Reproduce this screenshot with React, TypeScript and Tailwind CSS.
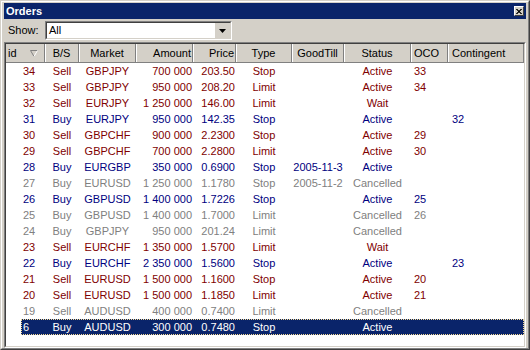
import React from 'react';

type Side = 'Buy' | 'Sell';

interface Order {
  id: number;
  side: Side;
  market: string;
  amount: string;
  price: string;
  type: 'Stop' | 'Limit';
  goodTill?: string;
  status: 'Active' | 'Wait' | 'Cancelled';
  oco?: string;
  contingent?: string;
}

const ORDERS: Order[] = [
  { id: 34, side: 'Sell', market: 'GBPJPY', amount: '700 000', price: '203.50', type: 'Stop', status: 'Active', oco: '33' },
  { id: 33, side: 'Sell', market: 'GBPJPY', amount: '950 000', price: '208.20', type: 'Limit', status: 'Active', oco: '34' },
  { id: 32, side: 'Sell', market: 'EURJPY', amount: '1 250 000', price: '146.00', type: 'Limit', status: 'Wait' },
  { id: 31, side: 'Buy', market: 'EURJPY', amount: '950 000', price: '142.35', type: 'Stop', status: 'Active', contingent: '32' },
  { id: 30, side: 'Sell', market: 'GBPCHF', amount: '900 000', price: '2.2300', type: 'Stop', status: 'Active', oco: '29' },
  { id: 29, side: 'Sell', market: 'GBPCHF', amount: '700 000', price: '2.2800', type: 'Limit', status: 'Active', oco: '30' },
  { id: 28, side: 'Buy', market: 'EURGBP', amount: '350 000', price: '0.6900', type: 'Stop', goodTill: '2005-11-3', status: 'Active' },
  { id: 27, side: 'Buy', market: 'EURUSD', amount: '1 250 000', price: '1.1780', type: 'Stop', goodTill: '2005-11-2', status: 'Cancelled' },
  { id: 26, side: 'Buy', market: 'GBPUSD', amount: '1 400 000', price: '1.7226', type: 'Stop', status: 'Active', oco: '25' },
  { id: 25, side: 'Buy', market: 'GBPUSD', amount: '1 400 000', price: '1.7000', type: 'Limit', status: 'Cancelled', oco: '26' },
  { id: 24, side: 'Buy', market: 'GBPJPY', amount: '950 000', price: '201.24', type: 'Limit', status: 'Cancelled' },
  { id: 23, side: 'Sell', market: 'EURCHF', amount: '1 350 000', price: '1.5700', type: 'Limit', status: 'Wait' },
  { id: 22, side: 'Buy', market: 'EURCHF', amount: '2 350 000', price: '1.5600', type: 'Stop', status: 'Active', contingent: '23' },
  { id: 21, side: 'Sell', market: 'EURUSD', amount: '1 500 000', price: '1.1600', type: 'Stop', status: 'Active', oco: '20' },
  { id: 20, side: 'Sell', market: 'EURUSD', amount: '1 500 000', price: '1.1850', type: 'Limit', status: 'Active', oco: '21' },
  { id: 19, side: 'Sell', market: 'AUDUSD', amount: '400 000', price: '0.7400', type: 'Limit', status: 'Cancelled' },
  { id: 6, side: 'Buy', market: 'AUDUSD', amount: '300 000', price: '0.7480', type: 'Stop', status: 'Active' },
];

const SELECTED_ID = 6;

// header cells carry a 1px separator on the right, so paddings differ slightly from the rows
const HEADERS: { label: string; cls: string }[] = [
  { label: 'B/S', cls: 'w-[34px] justify-center' },
  { label: 'Market', cls: 'w-[57px] justify-center' },
  { label: 'Amount', cls: 'w-[57px] justify-end pr-[1px]' },
  { label: 'Price', cls: 'w-[43px] justify-end pr-[1px]' },
  { label: 'Type', cls: 'w-[56px] justify-center' },
  { label: 'GoodTill', cls: 'w-[52px] justify-center' },
  { label: 'Status', cls: 'w-[67px] justify-center' },
  { label: 'OCO', cls: 'w-[37px] justify-start pl-[3px]' },
  { label: 'Contingent', cls: 'w-[76px] justify-start pl-[4px]' },
];

function toneFor(order: Order, selected: boolean) {
  if (selected) return 'text-white';
  if (order.status === 'Cancelled') return 'text-[#808080]';
  return order.side === 'Buy' ? 'text-[#000080]' : 'text-[#800000]';
}

function SortArrow() {
  return (
    <svg width="8" height="7" viewBox="0 0 8 7" className="shrink-0">
      <path d="M0.5 0.5 H7.5" stroke="#808080" />
      <path d="M0.5 0.5 L4 6.5" stroke="#808080" />
      <path d="M7.5 0.5 L4 6.5" stroke="#ffffff" />
    </svg>
  );
}

function CloseButton() {
  return (
    <div className="w-[10px] h-[10px] mr-[2px] border-t border-l border-white border-r border-b border-r-[#404040] border-b-[#404040] bg-[#d4d0c8] flex items-center justify-center">
      <svg width="6" height="5" viewBox="0 0 6 5">
        <path d="M0 0 L5 5 M1 0 L6 5 M5 0 L0 5 M6 0 L1 5" stroke="#000" strokeWidth="0.8" />
      </svg>
    </div>
  );
}

function ShowCombo() {
  return (
    <div className="w-[187px] h-[19px] border-t border-l border-[#808080] border-r border-b border-r-white border-b-white">
      <div className="h-full border-t border-l border-[#404040] border-r border-b border-r-[#d4d0c8] border-b-[#d4d0c8] bg-white flex items-center">
        <span className="flex-1 pl-[2px] leading-[15px]">All</span>
        <div className="w-[15px] h-full bg-[#d4d0c8] flex items-center justify-center">
          <svg width="7" height="4" viewBox="0 0 7 4">
            <path d="M0 0 H7 L3.5 4 Z" fill="#000" />
          </svg>
        </div>
      </div>
    </div>
  );
}

function OrderRow({ order }: { order: Order }) {
  const selected = order.id === SELECTED_ID;
  const tone = toneFor(order, selected);
  return (
    <div className="flex pl-[15px] h-[16px] leading-[14px]">
      <div
        className={`flex flex-1 ${tone} ${
          selected ? 'bg-[#0a246a] border border-dotted border-[#f5db95]' : 'border border-transparent'
        }`}
      >
        <div className="w-[23px] shrink-0 pl-[1px]">{order.id}</div>
        <div className="w-[34px] shrink-0 text-center">{order.side}</div>
        <div className="w-[57px] shrink-0 text-center">{order.market}</div>
        <div className="w-[57px] shrink-0 text-right pr-[1px] whitespace-nowrap">{order.amount}</div>
        <div className="w-[43px] shrink-0 text-right pr-[1px]">{order.price}</div>
        <div className="w-[56px] shrink-0 text-center">{order.type}</div>
        <div className="w-[52px] shrink-0 text-center whitespace-nowrap">{order.goodTill}</div>
        <div className="w-[67px] shrink-0 text-center">{order.status}</div>
        <div className="w-[37px] shrink-0 pl-[3px]">{order.oco}</div>
        <div className="flex-1 pl-[4px]">{order.contingent}</div>
      </div>
    </div>
  );
}

export default function App() {
  return (
    <div className="w-[530px] h-[350px] bg-[#d4d0c8] border-t border-l border-[#d4d0c8] border-r border-b border-r-[#404040] border-b-[#404040] font-['Liberation_Sans',Arial,sans-serif] text-[11px] text-black">
      <div className="h-full flex flex-col border-t border-l border-white border-r border-b border-r-[#808080] border-b-[#808080] pt-[1px] px-[2px]">
        {/* caption */}
        <div className="h-[16px] shrink-0 bg-[#0a246a] flex items-center justify-between">
          <span className="pl-[2px] font-bold text-white text-[11px] leading-[16px]">Orders</span>
          <CloseButton />
        </div>

        {/* filter */}
        <div className="mt-[2px] h-[19px] shrink-0 flex items-center">
          <span className="w-[41px] pl-[4px]">Show:</span>
          <ShowCombo />
        </div>

        {/* list view */}
        <div className="mt-[2px] flex-1 border-t border-l border-[#808080] border-r border-b border-r-white border-b-white">
          <div className="h-full bg-white border-t border-l border-[#404040] border-r border-b border-r-[#d4d0c8] border-b-[#d4d0c8] flex flex-col">
            <div className="h-[19px] shrink-0 flex bg-[#d4d0c8] border-b border-[#808080]">
              <div className="w-[39px] shrink-0 flex items-center justify-between pl-[2px] pr-[6px] border-r border-[#808080]">
                <span>id</span>
                <SortArrow />
              </div>
              {HEADERS.map((h) => (
                <div
                  key={h.label}
                  className={`${h.cls} shrink-0 flex items-center border-r border-[#808080] shadow-[inset_1px_0_0_#ffffff] whitespace-nowrap`}
                >
                  {h.label}
                </div>
              ))}
            </div>
            {ORDERS.map((o) => (
              <OrderRow key={o.id} order={o} />
            ))}
          </div>
        </div>
      </div>
    </div>
  );
}
